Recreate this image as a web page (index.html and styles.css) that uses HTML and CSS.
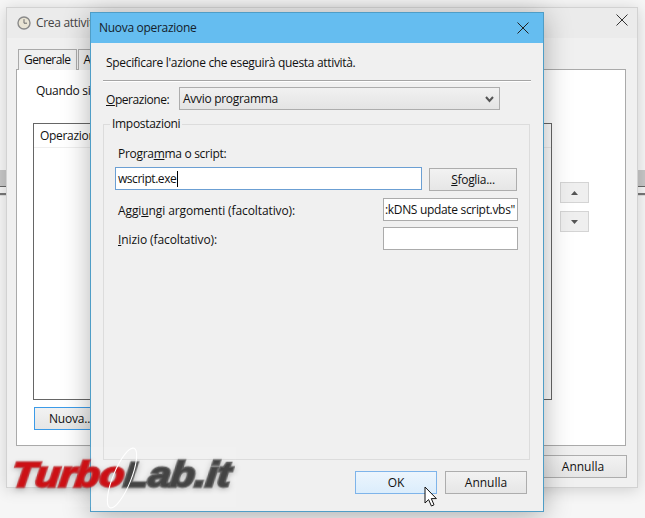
FILE: index.html
```html
<!DOCTYPE html>
<html lang="it">
<head>
<meta charset="utf-8">
<title>Nuova operazione</title>
<link rel="stylesheet" href="styles.css">
</head>
<body>
<div class="desktop">
  <div class="band"></div>

  <section class="window back">
    <header class="back-title">
      <svg class="clock" width="14" height="14" viewBox="0 0 14 14"><circle cx="7" cy="7" r="6" fill="#e9e4d4" stroke="#8a8a8a" stroke-width="1.4"/><path d="M7 3.2V7.2H10" fill="none" stroke="#6b6b6b" stroke-width="1"/></svg>
      <span>Crea attività</span>
      <svg class="close back-close" width="12" height="12" viewBox="0 0 12 12"><path d="M.5.5 11.5 11.5M11.5.5.5 11.5" stroke="#333" stroke-width="1" fill="none"/></svg>
    </header>
    <div class="back-body">
      <div class="tabs">
        <div class="tab">Generale</div>
        <div class="tab">Attivazione</div>
      </div>
      <div class="panel">
        <p class="when">Quando si crea un'attività</p>
        <div class="list-row">
          <div class="list"><div class="list-head">Operazione</div></div>
          <div class="arrows">
            <div class="arrow"><svg width="7" height="4" viewBox="0 0 7 4"><path d="M3.5 0 7 4H0Z" fill="#555"/></svg></div>
            <div class="arrow"><svg width="7" height="4" viewBox="0 0 7 4"><path d="M0 0H7L3.5 4Z" fill="#555"/></svg></div>
          </div>
        </div>
        <div class="btn new">Nuova...</div>
      </div>
      <div class="back-foot"><div class="btn">Annulla</div></div>
    </div>
  </section>

  <section class="window front">
    <header class="front-title">
      <span>Nuova operazione</span>
      <svg class="close" width="12" height="12" viewBox="0 0 12 12"><path d="M.5.5 11.5 11.5M11.5.5.5 11.5" stroke="#222" stroke-width="1" fill="none"/></svg>
    </header>
    <div class="front-body">
      <p class="intro">Specificare l'azione che eseguirà questa attività.</p>
      <div class="rule"></div>
      <div class="op-row">
        <span class="op-label"><u>O</u>perazione:</span>
        <div class="select">
          <span>Avvio programma</span>
          <svg width="9" height="7" viewBox="0 0 9 7"><path d="M1 1 4.5 5 8 1" fill="none" stroke="#555" stroke-width="2"/></svg>
        </div>
      </div>
      <fieldset class="group">
        <legend>Impostazioni</legend>
        <div class="field-label">Progra<u>m</u>ma o script:</div>
        <div class="prog-row">
          <div class="input active">wscript.exe<span class="caret"></span></div>
          <div class="btn browse"><span><u>S</u>foglia...</span></div>
        </div>
        <div class="arg-row first">
          <span class="field-label flat">Aggi<u>u</u>ngi argomenti (facoltativo):</span>
          <div class="input small scrolled">:kDNS update script.vbs"</div>
        </div>
        <div class="arg-row">
          <span class="field-label flat"><u>I</u>nizio (facoltativo):</span>
          <div class="input small"></div>
        </div>
      </fieldset>
      <div class="foot">
        <div class="btn ok">OK</div>
        <div class="btn">Annulla</div>
      </div>
    </div>
  </section>

  <svg class="pointer" width="14" height="22" viewBox="0 0 14 22"><path d="M1 1V17L4.6 13.6 7.4 20 10 18.8 7.3 12.6H12.4Z" fill="#fff" stroke="#111" stroke-width="1"/></svg>

  <div class="logo">
    <span class="logo-text"><span class="red">Turbo</span><span class="dark">Lab.it</span></span>
    <svg class="swoosh" width="44" height="62" viewBox="0 0 44 62"><ellipse cx="22" cy="31" rx="9" ry="32" transform="rotate(22 22 31)" fill="none" stroke="#fff" stroke-width="1.1"/></svg>
  </div>
</div>
</body>
</html>
```
FILE: styles.css
```css
* { box-sizing: border-box; }
html, body { margin: 0; padding: 0; }
body {
  width: 645px;
  height: 518px;
  overflow: hidden;
  background: #fff;
  font-family: "Open Sans", "Noto Sans", sans-serif;
  font-size: 12px;
  line-height: 16px;
  letter-spacing: -.3px;
  color: #111;
}
p { margin: 0; }

.desktop {
  position: relative;
  width: 645px;
  height: 518px;
  overflow: hidden;
  background: #f6f6f6;
}
.band {
  position: absolute;
  left: 0;
  top: 170px;
  width: 645px;
  height: 26px;
  background: linear-gradient(#c6c6c6 0 16px, #666 16px 17px, #f4f4f4 17px 23px, #777 23px 25px, #ddd 25px);
}

.window { position: absolute; }

/* Back window */
.back {
  left: 6px;
  top: 7px;
  width: 632px;
  height: 481px;
  display: flex;
  flex-direction: column;
  background: #f0f0f0;
  border: 1px solid #d2d2d2;
  box-shadow: 0 2px 14px rgba(0, 0, 0, .16);
}
.back-title {
  height: 30px;
  flex: none;
  display: flex;
  align-items: center;
  gap: 5px;
  padding: 0 9px 0 10px;
  background: #ebebeb;
  color: #444;
  white-space: nowrap;
}
.clock { flex: none; }
.back-close { margin: -6px 0 0 auto; }
.back-body { flex: 1; padding: 11px 11px 0 9px; }
.tabs { display: flex; height: 21px; padding-left: 2px; }
.tab {
  height: 21px;
  padding: 2px 5px 0;
  border: 1px solid #aaa;
  border-bottom: 0;
  background: #f0f0f0;
  margin-right: 1px;
  letter-spacing: -.55px;
}
.panel {
  height: 377px;
  padding: 13px 0 0 16px;
  background: #fff;
  border: 1px solid #aaa;
  margin-top: -1px;
}
.when { padding: 0 0 0 3px; height: 40px; }
.list-row { display: flex; gap: 8px; height: 277px; }
.list {
  width: 519px;
  height: 277px;
  border: 1px solid #666;
  background: #fff;
}
.list-head {
  height: 24px;
  padding: 4px 0 0 6px;
  border-bottom: 1px solid #eee;
}
.arrows { display: flex; flex-direction: column; gap: 8px; padding-top: 59px; }
.arrow {
  width: 29px;
  height: 21px;
  display: flex;
  align-items: center;
  justify-content: center;
  background: #efefef;
  border: 1px solid #d4d4d4;
}

.btn {
  width: 82px;
  height: 23px;
  flex: none;
  display: flex;
  align-items: center;
  justify-content: center;
  background: linear-gradient(#f2f2f2, #e6e6e6);
  border: 1px solid #adadad;
  white-space: nowrap;
  letter-spacing: 0;
}
.new {
  width: 74px;
  margin: 7px 0 0 1px;
  border: 1px solid #3c9be8;
  letter-spacing: -.2px;
}
.back-foot { display: flex; justify-content: flex-end; padding: 9px 0 0; margin-right: -1px; }
.back-foot .btn { width: 88px; }

/* Front window */
.front {
  left: 90px;
  top: 12px;
  width: 454px;
  height: 500px;
  display: flex;
  flex-direction: column;
  background: #f0f0f0;
  border: 1px solid #4f9dc6;
  box-shadow: 0 4px 26px rgba(0, 0, 0, .3);
}
.front-title {
  height: 30px;
  flex: none;
  display: flex;
  align-items: center;
  justify-content: space-between;
  padding: 0 14px 0 8px;
  background: #65bdf0;
  color: #14212b;
}
.front-body { flex: 1; padding: 12px 12px 0 12px; }
.intro { padding-left: 3px; height: 25px; letter-spacing: -.32px; }
.rule {
  height: 2px;
  background: linear-gradient(#a5a5a5 0 1px, #fff 1px);
}
.op-row { display: flex; align-items: center; height: 23px; margin-top: 5px; padding-left: 3px; }
.op-label { width: 73px; flex: none; padding-top: 2px; letter-spacing: -.45px; }
.select {
  width: 321px;
  height: 23px;
  display: flex;
  align-items: center;
  justify-content: space-between;
  padding: 1px 5px 0 3px;
  background: linear-gradient(#f1f1f1, #e4e4e4);
  border: 1px solid #adadad;
}
.group {
  width: 427px;
  height: 344px;
  margin: 6px 0 0;
  padding: 14px 12px 0 11px;
  border: 1px solid #dcdcdc;
  min-width: 0;
}
.group legend { margin-left: -5px; padding: 0 2px; line-height: 16px; }
.field-label { padding-left: 3px; height: 16px; }
.flat { display: block; padding-top: 3px; height: 19px; letter-spacing: -.1px; }
.prog-row { display: flex; gap: 7px; margin-top: 5px; }
.input {
  height: 23px;
  width: 307px;
  flex: none;
  display: flex;
  align-items: center;
  padding: 0 2px;
  background: #fff;
  border: 1px solid #ababab;
  white-space: nowrap;
  overflow: hidden;
}
.active { border-color: #6b9fd3; letter-spacing: -.45px; }
.caret { display: inline-block; width: 1px; height: 16px; margin-left: 1px; background: #000; }
.browse { width: 88px; margin-top: 1px; letter-spacing: -.3px; }
.arg-row {
  display: flex;
  align-items: center;
  justify-content: space-between;
  margin-top: 6px;
  width: 403px;
}
.first { margin-top: 7px; }
.small { width: 135px; height: 23px; }
.scrolled { justify-content: flex-end; letter-spacing: -.32px; }
.foot {
  display: flex;
  justify-content: flex-end;
  gap: 8px;
  margin-top: 11px;
  padding-right: 4px;
}
.ok {
  background: linear-gradient(#ecf5fd, #dbedfc);
  border-color: #7eb4ea;
}

.pointer { position: absolute; left: 424px; top: 486px; }

/* Logo watermark */
.logo {
  position: absolute;
  left: 8px;
  top: 447px;
  width: 228px;
  height: 60px;
  background: rgba(255, 255, 255, .08);
}
.logo-text {
  display: block;
  margin: 6px 0 0 4px;
  width: max-content;
  font-family: "Liberation Sans", sans-serif;
  font-weight: 700;
  font-style: italic;
  font-size: 38px;
  line-height: 44px;
  letter-spacing: 0;
  transform-origin: 0 50%;
  transform: scale(1.05, .92) skewX(-6deg);
  -webkit-text-stroke: 3px;
  paint-order: stroke fill;
  filter: drop-shadow(0 2px 3px rgba(0, 0, 0, .25));
}
.red { color: #cc1015; -webkit-text-stroke-color: rgba(190, 20, 25, .8); }
.dark { color: #444; -webkit-text-stroke-color: rgba(70, 70, 70, .8); }
.swoosh { position: absolute; left: 92px; top: 0; }
```
